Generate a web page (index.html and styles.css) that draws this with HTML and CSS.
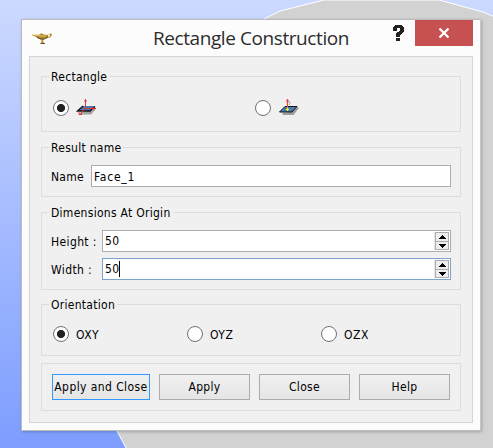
FILE: index.html
```html
<!DOCTYPE html>
<html lang="en">
<head>
<meta charset="utf-8">
<title>Rectangle Construction</title>
<link rel="stylesheet" href="styles.css">
</head>
<body>
<svg class="scene" width="493" height="448" viewBox="0 0 493 448" aria-hidden="true">
  <path d="M324 0L280 11L264 19L90 200V370L117 431L124 444L127 450H495V17L483 12L439 0Z" fill="#d2d2d2" stroke="#fff"/>
</svg>
<main class="dialog">
  <header class="titlebar">
    <svg class="lamp" width="22" height="14" viewBox="0 0 22 14">
      <path d="M0.5 3L6 3.2L9 2.2L10.5 1L12 2.2L16 3L20 1.2L21 3L19.5 5L14 7L12.2 8V10L14 12H8.5L10.5 10V8L5 5Z" fill="#b08a35"/>
      <path d="M1 3H6L10 4H15" fill="none" stroke="#e8c36b"/>
      <path d="M6 5.5L10 7H13L17 5M10 11.5H14" fill="none" stroke="#65502a"/>
      <path d="M17 3L19 2V4L17 5Z" fill="#fff4d8"/>
    </svg>
    <h1><span>Rectangle Construction</span></h1>
    <svg class="help" width="11" height="17" viewBox="0 0 11 17">
      <path d="M0 2H1V1H2V0H9V1H10V2H11V7H10V8H9V9H8V10H7V12H3V8H4V7H6V6H7V3H4V6H0ZM3 13H7V16H3Z" fill="#222"/>
    </svg>
    <button class="exit" aria-label="Close dialog"><svg width="12" height="10" viewBox="0 0 12 10"><path d="M1.5 .5L10.5 9.5M10.5 .5L1.5 9.5" stroke="#fff" stroke-width="2.2"/></svg></button>
  </header>
  <div class="panel">
    <section class="group shape">
      <h2>Rectangle</h2>
      <div class="radios two">
        <label><i class="radio on"></i>
          <svg width="24" height="20" viewBox="0 0 24 20">
            <path d="M4 14.500L14 13L19 9.500L20 11L15 16.500H5Z" fill="#777" opacity=".65"/>
            <path d="M1.500 13L7 8H19L14 13Z" fill="#477bb4"/>
            <path d="M7 8L1.500 13H14L19 8.500" fill="none" stroke="#111" stroke-width="1.300"/>
            <path d="M9.500 1V9.500M9 10.500H20M9 10L4 16.500M8 3H11M17 9V12M3 13.500V16.500H6" fill="none" stroke="#dd343c"/>
          </svg></label>
        <label><i class="radio"></i>
          <svg width="24" height="20" viewBox="0 0 24 20">
            <path d="M4 15L14 14L19 9L21 10L15.500 17H5Z" fill="#777" opacity=".7"/>
            <path d="M1.500 14L7 8.500H19L14 14Z" fill="#477bb4" stroke="#111"/>
            <path d="M11 3L12 5L11 7" fill="none" stroke="#aaa"/>
            <path d="M9.500 1V10M8 3H11" fill="none" stroke="#e4454b" stroke-width="1.2"/>
            <path d="M9.500 9.500V13M8 11.500H11" stroke="#fff000" stroke-width="1.2"/>
          </svg></label>
      </div>
    </section>
    <section class="group result">
      <h2>Result name</h2>
      <div class="row"><span class="caption short">Name</span><div class="field name">Face_1</div></div>
    </section>
    <section class="group dims">
      <h2>Dimensions At Origin</h2>
      <div class="row"><span class="caption">Height :</span><div class="field">50<span class="spin"><i><svg width="7" height="4"><path d="M3 0H4V1H5V2H6V3H7V4H0V3H1V2H2V1H3Z"/></svg></i><i><svg width="7" height="4"><path d="M0 0H7V1H6V2H5V3H4V4H3V3H2V2H1V1H0Z"/></svg></i></span></div></div>
      <div class="row"><span class="caption">Width :</span><div class="field focus">50<b class="caret"></b><span class="spin"><i><svg width="7" height="4"><path d="M3 0H4V1H5V2H6V3H7V4H0V3H1V2H2V1H3Z"/></svg></i><i><svg width="7" height="4"><path d="M0 0H7V1H6V2H5V3H4V4H3V3H2V2H1V1H0Z"/></svg></i></span></div></div>
    </section>
    <section class="group orient">
      <h2>Orientation</h2>
      <div class="radios three">
        <label><i class="radio on"></i><span>OXY</span></label>
        <label><i class="radio"></i><span>OYZ</span></label>
        <label><i class="radio"></i><span>OZX</span></label>
      </div>
    </section>
    <section class="group actions">
      <button class="default">Apply and Close</button><button>Apply</button><button>Close</button><button>Help</button>
    </section>
  </div>
</main>
</body>
</html>
```
FILE: styles.css
```css
* { box-sizing: border-box; }
body {
  margin: 0;
  width: 493px;
  height: 448px;
  overflow: hidden;
  padding: 19px 0 0 21px;
  background: linear-gradient(#ccd9ff, #7d9dff);
  font: 12px/16px "DejaVu Sans Condensed", "DejaVu Sans", sans-serif;
  font-stretch: condensed;
  letter-spacing: .28px;
  color: #000;
}
.scene { position: absolute; left: 0; top: 0; }
.dialog {
  position: relative;
  width: 460px;
  height: 412px;
  padding: 0 8px 8px;
  border: 1px solid #bcbcbc;
  border-right-color: #c6c6c6;
  background: #fcfcfc;
  box-shadow: 1px 1px 3px rgba(0,0,0,.22);
}
.titlebar { display: flex; height: 36px; align-items: flex-start; margin: 0 -1px; }
.lamp { margin: 12px 0 0 2px; }
h1 {
  flex: 1;
  margin: 4px 0 0;
  font: 400 19px/28px "Open Sans", sans-serif;
  letter-spacing: -.42px;
  color: #2c2c2c;
  padding-left: 100px;
  white-space: nowrap;
}
.help { margin: 5px 11px 0 0; }
.exit {
  width: 58px;
  height: 26px;
  padding: 0;
  border: 0;
  background: #c75050;
  display: flex;
  align-items: center;
  justify-content: center;
}
.panel {
  width: 444px;
  height: 367px;
  margin-left: -1px;
  padding: 19px 11px 11px;
  background: #f0f0f0;
  border: 1px solid #d5d5d5;
}
.group { border: 1px solid #dcdcdc; padding: 0 9px; }
h2 {
  width: max-content;
  height: 16px;
  margin: -9px 0 0 -2px;
  padding: 1px 2px 0;
  background: #f0f0f0;
  font: inherit;
}
.shape { height: 56px; margin-bottom: 15px; }
.result { height: 50px; margin-bottom: 15px; }
.dims { height: 78px; margin-bottom: 14px; }
.orient { height: 52px; margin-bottom: 7px; }
.radios { display: grid; padding-left: 2px; }
.two { grid-template-columns: 202px 1fr; margin-top: 15px; }
.three { grid-template-columns: 134px 134px 1fr; margin-top: 13px; }
.radios label { display: flex; align-items: center; height: 18px; gap: 7px; }
.radios span { padding-top: 1px; letter-spacing: .5px; }
.radio {
  width: 16px;
  height: 16px;
  border: 1px solid #707070;
  border-radius: 50%;
  background: #fff;
}
.radio.on { background: radial-gradient(circle, #222 0 3.700px, #fff 4.400px); }
.row { display: flex; height: 22px; align-items: center; margin-top: 10px; }
.row + .row { margin-top: 6px; }
.caption { width: 51px; padding-top: 1px; white-space: nowrap; letter-spacing: .38px; }
.short { width: 40px; letter-spacing: .28px; }
.field {
  display: flex;
  flex: 1;
  height: 22px;
  padding: 0 1px 0 2px;
  align-items: center;
  border: 1px solid #abadb3;
  background: #fff;
}
.name { padding-top: 2px; letter-spacing: .75px; }
.focus { border-color: #7da2ce; }
.caret { width: 1px; height: 16px; background: #000; }
.spin {
  width: 15px;
  height: 18px;
  margin-left: auto;
  background: #eee;
  border-left: 1px solid #e5e5e5;
  display: flex;
  flex-direction: column;
}
.spin i {
  width: 14px;
  height: 10px;
  flex: none;
  border: 1px solid #acacac;
  display: flex;
  align-items: center;
  justify-content: center;
}
.spin i + i { height: 8px; border-top: 0; }
.actions {
  height: 48px;
  padding: 0 10px;
  display: grid;
  grid-template-columns: 98px 91px 91px 91px;
  gap: 9px;
  align-items: center;
}
.actions button {
  height: 26px;
  padding: 0;
  border: 1px solid #acacac;
  background: linear-gradient(#f0f0f0, #e5e5e5);
  font: inherit;
  letter-spacing: .3px;
  color: #000;
  white-space: nowrap;
}
.actions .default { border-color: #3399ff; letter-spacing: .42px; }
```
